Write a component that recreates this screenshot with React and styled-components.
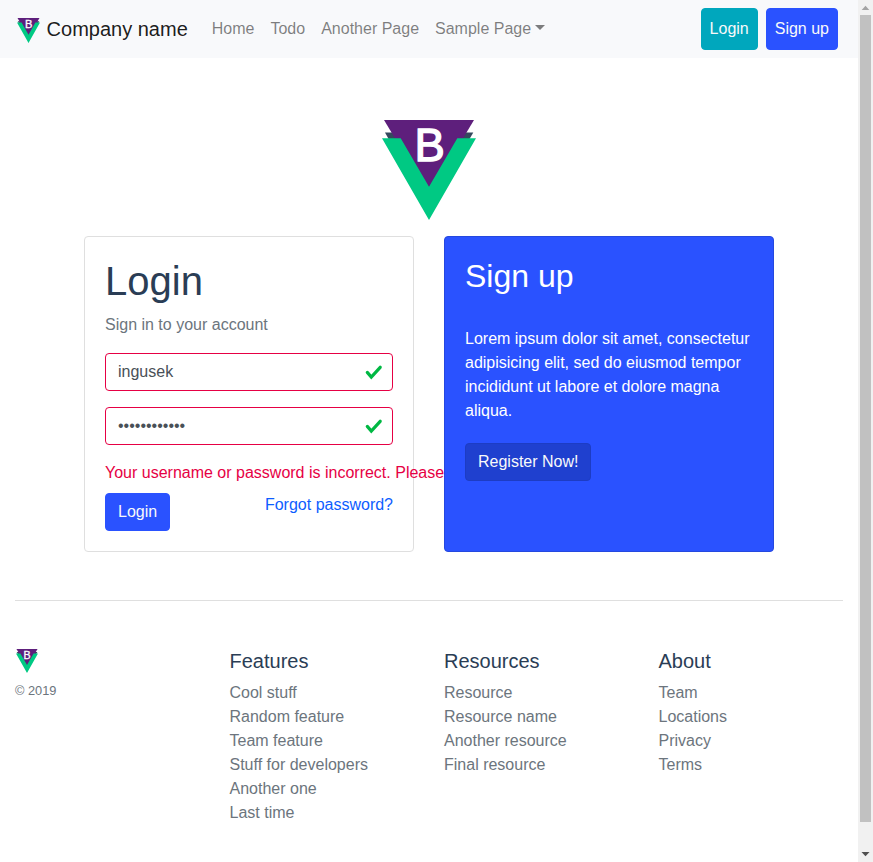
import React from "react";
import styled, { createGlobalStyle } from "styled-components";

const Global = createGlobalStyle`
  *, *::before, *::after { box-sizing: border-box; }
  html, body { margin: 0; height: 100%; overflow: hidden; }
  body { font: 400 16px/24px "Liberation Sans", Arial, sans-serif; color: #2a3d55; background: #fff; }
  h1, h2, h5, p, ul { margin: 0; padding: 0; font-weight: 400; }
  a { text-decoration: none; color: inherit; }
  button, input { font: inherit; }
`;

const Window = styled.div`
  display: flex;
  height: 862px;
`;
const Page = styled.div`
  flex: 1;
  min-width: 0;
  overflow: hidden;
`;
const Navbar = styled.nav`
  display: flex;
  align-items: center;
  height: 58px;
  padding: 8px 16px;
  background: #f8f9fb;
`;
const Brand = styled.a`
  display: flex;
  align-items: center;
  gap: 6.6px;
  margin-right: 16px;
  padding-left: 1px;
  font-size: 20px;
  line-height: 30px;
  color: rgba(0, 0, 0, 0.9);
`;
const NavLink = styled.a`
  padding: 8px;
  color: rgba(0, 0, 0, 0.5);
  white-space: nowrap;
`;
const Caret = styled.span`
  display: inline-block;
  margin-left: 3.5px;
  vertical-align: 4px;
  border: 5px solid transparent;
  border-top-color: currentColor;
  border-bottom: 0;
`;
const NavActions = styled.div`
  display: flex;
  gap: 8px;
  margin: 0 4px 0 auto;
`;
const Button = styled.button`
  padding: ${(p) => (p.$nav ? "8px" : "6px 12px")};
  border: 1px solid ${(p) => p.$border || p.$bg || "#2a52ff"};
  border-radius: 4px;
  background: ${(p) => p.$bg || "#2a52ff"};
  color: #f8f9fa;
`;
const LogoSvg = styled.svg`
  display: block;
  margin-top: ${(p) => p.$drop || 0}px;
  margin-left: ${(p) => p.$indent || 0}px;
`;
const Hero = styled.div`
  display: flex;
  justify-content: center;
  padding: 62px 0 16px;
`;
const Cards = styled.div`
  display: grid;
  grid-template-columns: 330px 330px;
  justify-content: center;
  gap: 30px;
`;
const Card = styled.section`
  position: relative;
  height: 316px;
  padding: 20px;
  border: 1px solid ${(p) => (p.$primary ? "#2548df" : "#dfdfdf")};
  border-radius: 4px;
  background: ${(p) => (p.$primary ? "#2a52ff" : "#fff")};
  color: ${(p) => (p.$primary ? "#fff" : "inherit")};
`;
const LoginTitle = styled.h1`
  font-size: 40px;
  line-height: 48px;
  margin-bottom: 8px;
`;
const SignupTitle = styled.h2`
  font-size: 32px;
  line-height: 38px;
  margin-bottom: 32px;
`;
const Muted = styled.p`
  color: #6c757d;
  margin-bottom: 16px;
`;
const Field = styled.div`
  display: flex;
  align-items: center;
  height: 38px;
  margin-bottom: 16px;
  padding: 0 9px 0 12px;
  border: 1px solid #e60044;
  border-radius: 4px;
`;
const Input = styled.input`
  flex: 1;
  min-width: 0;
  height: 24px;
  padding: 0;
  border: 0;
  outline: 0;
  background: none;
  color: #495057;
`;
const ErrorText = styled.p`
  margin-bottom: 8px;
  white-space: nowrap;
  color: #e60044;
`;
const FormActions = styled.div`
  display: flex;
  align-items: flex-start;
  justify-content: space-between;
`;
const ForgotLink = styled.a`
  color: #0d5dff;
`;
const Blurb = styled.p`
  margin-bottom: 20px;
`;
const Footer = styled.footer`
  display: grid;
  grid-template-columns: repeat(4, 214.5px);
  margin: 48px 0 0 15px;
  padding-top: 48px;
  position: relative;
  &::before {
    content: "";
    position: absolute;
    top: 0;
    left: 0;
    width: 828px;
    height: 1px;
    background: #dfdfdf;
  }
`;
const FooterColumn = styled.div`
  padding-top: 1px;
`;
const FooterTitle = styled.h5`
  margin-bottom: 8px;
  font-size: 20px;
  line-height: 24px;
`;
const FooterList = styled.ul`
  list-style: none;
  color: #6c757d;
`;
const Copyright = styled.small`
  display: block;
  margin-top: 6px;
  font-size: 12.8px;
  color: #6c757d;
`;
const Scrollbar = styled.div`
  display: flex;
  flex-direction: column;
  align-items: center;
  width: 15px;
  background: #f1f1f1;
`;
const ScrollArrow = styled.svg`
  display: block;
  width: 15px;
  height: 15px;
`;
const Thumb = styled.div`
  width: 11px;
  height: 807px;
  background: #c1c1c1;
`;
const ScrollTrack = styled.div`
  flex: 1;
`;

function Logo({ width, height, drop, indent }) {
  return (
    <LogoSvg width={width} height={height} $drop={drop} $indent={indent} viewBox="0 0 94 100" preserveAspectRatio="none">
      <path d="M3 12.6H91.3L84 25H10Z" fill="#35495e" />
      <path d="M2 0H92L47 75Z" fill="#5e1f7c" />
      <path d="M0 18.3H18.7L47 66.8L75.3 18.3H94L47 100Z" fill="#00c983" />
      <text x="32.4" y="41" fontFamily="Liberation Sans, Arial, sans-serif" fontSize="45.5" fill="#fff" stroke="#fff" strokeWidth="1.3">B</text>
    </LogoSvg>
  );
}

function Check() {
  return (
    <svg width="18" height="18" viewBox="0 0 18 18">
      <path fill="none" stroke="#00b843" strokeWidth="3.2" strokeLinecap="round" strokeLinejoin="miter" d="M2.3 9.4L6.3 14L15.2 4.3" />
    </svg>
  );
}

const columns = [
  ["Features", ["Cool stuff", "Random feature", "Team feature", "Stuff for developers", "Another one", "Last time"]],
  ["Resources", ["Resource", "Resource name", "Another resource", "Final resource"]],
  ["About", ["Team", "Locations", "Privacy", "Terms"]],
];

export default function App() {
  return (
    <>
      <Global />
      <Window>
        <Page>
          <Navbar>
            <Brand href="#"><Logo width={23} height={25} drop={2} />Company name</Brand>
            <NavLink href="#">Home</NavLink>
            <NavLink href="#">Todo</NavLink>
            <NavLink href="#">Another Page</NavLink>
            <NavLink href="#">Sample Page<Caret /></NavLink>
            <NavActions>
              <Button $nav $bg="#00a7bd">Login</Button>
              <Button $nav>Sign up</Button>
            </NavActions>
          </Navbar>
          <Hero><Logo width={94} height={100} /></Hero>
          <Cards>
            <Card>
              <LoginTitle>Login</LoginTitle>
              <Muted>Sign in to your account</Muted>
              <Field><Input defaultValue="ingusek" /><Check /></Field>
              <Field><Input type="password" defaultValue="passwordpass" /><Check /></Field>
              <ErrorText>Your username or password is incorrect. Please</ErrorText>
              <FormActions>
                <Button>Login</Button>
                <ForgotLink href="#">Forgot password?</ForgotLink>
              </FormActions>
            </Card>
            <Card $primary>
              <SignupTitle>Sign up</SignupTitle>
              <Blurb>Lorem ipsum dolor sit amet, consectetur adipisicing elit, sed do eiusmod tempor incididunt ut labore et dolore magna aliqua.</Blurb>
              <Button $bg="#1f40cf" $border="#1d3cc4">Register Now!</Button>
            </Card>
          </Cards>
          <Footer>
            <FooterColumn>
              <Logo width={22} height={24} indent={1} />
              <Copyright>© 2019</Copyright>
            </FooterColumn>
            {columns.map(([title, items]) => (
              <FooterColumn key={title}>
                <FooterTitle>{title}</FooterTitle>
                <FooterList>{items.map((item) => <li key={item}><a href="#">{item}</a></li>)}</FooterList>
              </FooterColumn>
            ))}
          </Footer>
        </Page>
        <Scrollbar>
          <ScrollArrow viewBox="0 0 15 15"><path d="M3.7 10L7.5 5.8L11.3 10Z" fill="#a3a3a3" /></ScrollArrow>
          <Thumb />
          <ScrollTrack />
          <ScrollArrow viewBox="0 0 15 15"><path d="M3.5 5L7.5 9.3L11.5 5Z" fill="#505050" /></ScrollArrow>
        </Scrollbar>
      </Window>
    </>
  );
}
